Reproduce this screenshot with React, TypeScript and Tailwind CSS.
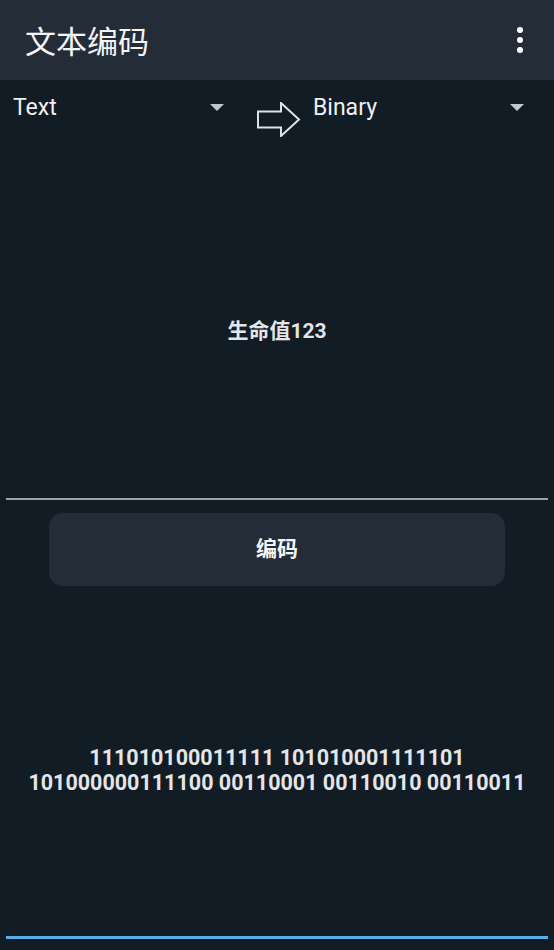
import { useState } from "react";

const LATIN = "font-['Roboto','Noto_Sans_CJK_SC',sans-serif]";

function Caret() {
  return (
    <svg width="14" height="7" viewBox="0 0 14 7" className="shrink-0">
      <path d="M0 0h14L7 7z" fill="#c4c7ca" />
    </svg>
  );
}

function Spinner({ label, className }: { label: string; className: string }) {
  return (
    <div className={`flex items-center justify-between ${className}`}>
      <span className="text-[23px] leading-none text-[#eef0f2]">{label}</span>
      <Caret />
    </div>
  );
}

export default function App() {
  const [input] = useState("生命值123");
  const output =
    "111010100011111 101010001111101 101000000111100 00110001 00110010 00110011";

  return (
    <div className={`w-[554px] h-[950px] bg-[#121c25] flex flex-col ${LATIN}`}>
      {/* Toolbar */}
      <header className="h-[80px] bg-[#242d37] flex items-center justify-between pl-[25px] pr-[31px] shrink-0">
        <h1 className="text-[31px] leading-none text-[#f4f5f6] pt-[4px]">文本编码</h1>
        <div className="flex flex-col gap-[4px]">
          <span className="w-[6px] h-[6px] rounded-full bg-white" />
          <span className="w-[6px] h-[6px] rounded-full bg-white" />
          <span className="w-[6px] h-[6px] rounded-full bg-white" />
        </div>
      </header>

      {/* Encoding selectors */}
      <div className="h-[56px] flex items-start pt-[15px] shrink-0">
        <Spinner label="Text" className="w-[236px] pl-[13px] pr-[12px] h-[24px]" />
        <div className="w-[77px] pl-[21px] pt-[7px]">
          <svg width="44" height="35" viewBox="0 0 44 35">
            <path
              d="M1 9.5h23V1l18 16.5L24 34v-8.5H1z"
              fill="none"
              stroke="#dfe2e4"
              strokeWidth="2"
              strokeLinejoin="miter"
            />
          </svg>
        </div>
        <Spinner label="Binary" className="w-[223px] pl-0 pr-[12px] h-[24px]" />
      </div>

      {/* Input */}
      <div className="h-[364px] flex items-center justify-center pt-[28px] mx-[6px] border-b-2 border-[#9ea3a8] shrink-0">
        <p className="text-[21px] font-bold text-[#e3e5e7] leading-[25px]">{input}</p>
      </div>

      {/* Encode button */}
      <div className="px-[49px] pt-[13px] shrink-0">
        <button
          type="button"
          className="w-full h-[73px] rounded-[14px] bg-[#242d37] text-[21px] font-bold text-[#f4f5f6] flex items-center justify-center"
        >
          编码
        </button>
      </div>

      {/* Output */}
      <div className="h-[350px] flex items-center justify-center px-[16px] pt-[18px] shrink-0">
        <p className="text-[21.5px] font-bold text-[#e3e5e7] leading-[25px] text-center">{output}</p>
      </div>
      <div className="mx-[6px] h-[3px] bg-[#5aaee8] shrink-0" />
    </div>
  );
}
